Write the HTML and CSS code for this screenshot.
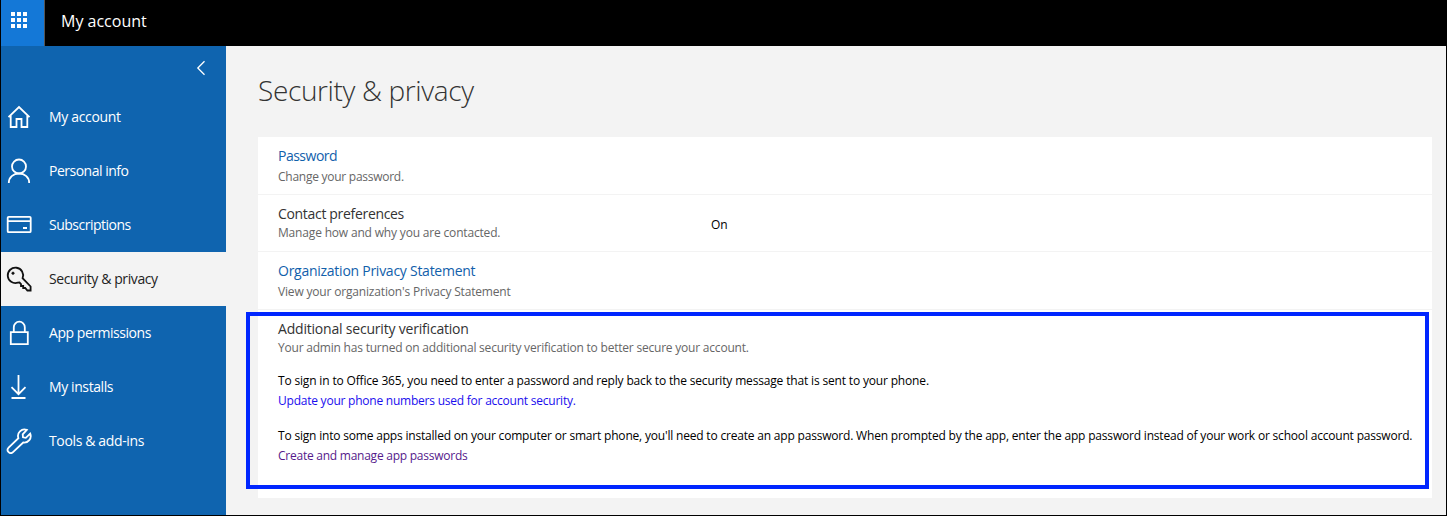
FILE: index.html
```html
<!DOCTYPE html>
<html lang="en">
<head>
<meta charset="utf-8">
<title>My account</title>
<link rel="stylesheet" href="styles.css">
</head>
<body>
<div class="app">
  <header class="topbar">
    <div class="launcher">
      <svg width="16" height="16" viewBox="0 0 16 16" fill="#fff"><path d="M0 0h4v4H0zM6 0h4v4H6zM12 0h4v4h-4zM0 6h4v4H0zM6 6h4v4H6zM12 6h4v4h-4zM0 12h4v4H0zM6 12h4v4H6zM12 12h4v4h-4z"/></svg>
    </div>
    <span class="brand">My account</span>
  </header>
  <div class="body">
    <nav class="sidebar">
      <div class="collapse"><svg width="10" height="16" viewBox="0 0 10 16"><path d="M8.500 1.200 1.800 8l6.700 6.800"/></svg></div>
      <a class="item"><svg class="icon" viewBox="0 0 26 26"><path d="M2.500 13.200 13 3l10.500 10.200M4.700 11.500V23h5.800v-8h5v8h5.800V11.500"/></svg><span class="t-account">My account</span></a>
      <a class="item"><svg class="icon" viewBox="0 0 26 26"><circle cx="13" cy="8.500" r="7"/><path d="M2.800 25c0-5.500 4.400-9.500 10.200-9.500S23.200 19.500 23.200 25"/></svg><span class="t-info">Personal info</span></a>
      <a class="item"><svg class="icon" viewBox="0 0 26 26"><rect x="1.700" y="4.800" width="23" height="15.400" rx="1"/><path d="M2 9.200h22.500M17 16h4"/></svg><span class="t-subs">Subscriptions</span></a>
      <a class="item active"><svg class="icon" viewBox="0 0 26 26"><path d="M16.600 12.200a7.700 7.700 0 1 0-4.800 4.500l1.700-.2 1.500 1.500v2h2.200v2h2l2.200 2.500h3.200v-4z"/><circle class="dot" cx="7" cy="7.200" r="1.200"/></svg><span class="t-sec">Security &amp; privacy</span></a>
      <a class="item"><svg class="icon" viewBox="0 0 26 26"><path d="M4.800 12.200h17v12h-17zM7.800 12V7.200a5.500 5.500 0 0 1 11 0V12"/></svg><span class="t-perm">App permissions</span></a>
      <a class="item"><svg class="icon" viewBox="0 0 26 26"><path d="M12.500 1v19M5.500 13.200l7 7 7-7M5.500 24h14"/></svg><span class="t-inst">My installs</span></a>
      <a class="item"><svg class="icon" viewBox="0 0 26 26"><path d="M20.800 1.900a6.500 6.500 0 0 0-8.400 8.300L2.600 19.700a3 3 0 0 0 4.400 4.400l10.200-9.600a6.500 6.500 0 0 0 7-8.900l-4.400 4.200-2.800-.5-.3-3z"/></svg><span class="t-tools">Tools &amp; add-ins</span></a>
    </nav>
    <main class="content">
      <h1><span>Security &amp; privacy</span></h1>
      <div class="panel">
        <section class="row">
          <div class="heading link t-pass">Password</div>
          <div class="sub t-change">Change your password.</div>
        </section>
        <section class="row split">
          <div class="left">
            <div class="heading t-contact">Contact preferences</div>
            <div class="sub near t-manage">Manage how and why you are contacted.</div>
          </div>
          <div class="state">On</div>
        </section>
        <section class="row tall">
          <div class="heading link t-org">Organization Privacy Statement</div>
          <div class="sub t-view">View your organization's Privacy Statement</div>
        </section>
        <section class="row verify">
          <div class="heading t-add">Additional security verification</div>
          <div class="sub near t-admin">Your admin has turned on additional security verification to better secure your account.</div>
          <p class="first"><span class="t-sign">To sign in to Office 365, you need to enter a password and reply back to the security message that is sent to your phone.</span><br><a class="update">Update your phone numbers used for account security.</a></p>
          <p><span class="t-into">To sign into some apps installed on your computer or smart phone, you'll need to create an app password. When prompted by the app, enter the app password instead of your work or school account password.</span><br><a class="create">Create and manage app passwords</a></p>
          <div class="highlight"></div>
        </section>
      </div>
    </main>
  </div>
</div>
</body>
</html>
```
FILE: styles.css
```css
* { box-sizing: border-box; }
body { margin: 0; font-family: "Open Sans", "Noto Sans", sans-serif; background: #f3f3f3; }
.app { height: 516px; display: flex; flex-direction: column; border: 1px solid #000; border-top: 0; overflow: hidden; }
.topbar { height: 46px; flex: none; display: flex; background: #000; color: #fff; }
.launcher { width: 44px; padding: 12px 0 0 10px; background: #1478d7; border-right: 1px solid #555; }
.launcher svg { display: block; }
.brand { margin-left: 16px; font-size: 16px; line-height: 42px; white-space: nowrap; }
.body { flex: 1; display: flex; min-height: 0; }
.sidebar { width: 225px; flex: none; background: #0f64af; color: #fff; }
.collapse { height: 44px; padding: 14px 0 0 195px; }
.collapse svg { display: block; fill: none; stroke: #fff; stroke-width: 1.3; }
.item { height: 54px; display: flex; align-items: center; padding-left: 5px; font-size: 14px; white-space: nowrap; }
.item span { margin-left: 17px; line-height: 20px; }
.icon { width: 26px; height: 26px; flex: none; fill: none; stroke: #fff; stroke-width: 1.800; }
.active { background: #f3f3f3; color: #222; }
.active .icon { stroke: #111; }
.dot { fill: #111; stroke-width: .6; }
.content { flex: 1; padding: 25px 14px 0 32px; min-width: 0; }
h1 { margin: 0; height: 66px; font-size: 28px; line-height: 38px; font-weight: 300; letter-spacing: -.36px; color: #333; white-space: nowrap; }
.panel { height: 361px; background: #fff; white-space: nowrap; }
.row { height: 58px; padding: 9px 20px 0; border-bottom: 1px solid #f3f3f3; }
.row.split { height: 57px; display: flex; }
.left { width: 433px; }
.heading { font-size: 14px; line-height: 20px; color: #333; }
.link { color: #1160ab; }
.sub { margin-top: 2px; font-size: 12px; line-height: 18px; color: #666; }
.near { margin-top: 0; }
.state { font-size: 12px; line-height: 42px; letter-spacing: -.2px; color: #000; }
.verify { position: relative; height: auto; border: 0; }
p { margin: 0 0 15px; font-size: 12px; line-height: 20px; color: #000; }
.first { margin-top: 14px; }
.update { color: #1a0dee; letter-spacing: -.23px; }
.create { color: #551a8b; letter-spacing: -.245px; }
.t-account { letter-spacing: -.34px; }
.t-info, .t-subs, .t-pass { letter-spacing: -.5px; }
.t-sec, .t-inst { letter-spacing: -.4px; }
.t-perm { letter-spacing: -.46px; }
.t-tools { letter-spacing: -.36px; }
.t-contact { letter-spacing: -.32px; }
.t-org { letter-spacing: -.26px; }
.t-add { letter-spacing: -.2px; }
.t-change { letter-spacing: -.26px; }
.t-manage, .t-view { letter-spacing: -.175px; }
.t-admin { letter-spacing: -.21px; }
.t-sign { letter-spacing: -.165px; }
.t-into { letter-spacing: -.19px; }
.highlight { position: absolute; left: -12px; top: 2px; width: 1183px; height: 177px; border: 4px solid #0026ff; }
```
